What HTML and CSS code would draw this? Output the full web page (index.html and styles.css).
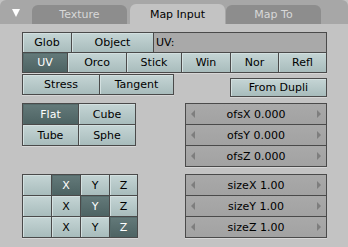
FILE: index.html
```html
<!DOCTYPE html>
<html lang="en">
    <head>
        <meta charset="UTF-8">
        <title>Map Input</title>
        <link rel="stylesheet" href="styles.css">
    </head>
    <body>
        <div class="panel">
            <div class="header">
                <span class="collapse"></span>
                <div class="tab">Texture</div>
                <div class="tab active">Map Input</div>
                <div class="tab last">Map To</div>
            </div>

            <div class="content">
                <div class="group top">
                    <div class="row">
                        <div class="btn" style="width:50px">Glob</div>
                        <div class="btn" style="width:83px">Object</div>
                        <div class="label" style="width:174px">UV:</div>
                    </div>
                    <div class="row">
                        <div class="btn on" style="width:46px">UV</div>
                        <div class="btn" style="width:60px">Orco</div>
                        <div class="btn" style="width:56px">Stick</div>
                        <div class="btn" style="width:50px">Win</div>
                        <div class="btn" style="width:49px">Nor</div>
                        <div class="btn" style="width:49px">Refl</div>
                    </div>
                </div>

                <div class="row third">
                    <div class="btn" style="width:78px">Stress</div>
                    <div class="btn" style="width:75px">Tangent</div>
                    <div class="dupli btn">From Dupli</div>
                </div>

                <div class="section">
                    <div class="group grid proj">
                        <div class="btn on">Flat</div>
                        <div class="btn">Cube</div>
                        <div class="btn">Tube</div>
                        <div class="btn">Sphe</div>
                    </div>
                    <div class="group fields">
                        <div class="num">ofsX 0.000</div>
                        <div class="num">ofsY 0.000</div>
                        <div class="num">ofsZ 0.000</div>
                    </div>
                </div>

                <div class="section lower">
                    <div class="group grid axes">
                        <div class="btn"></div>
                        <div class="btn on">X</div>
                        <div class="btn">Y</div>
                        <div class="btn">Z</div>
                        <div class="btn"></div>
                        <div class="btn">X</div>
                        <div class="btn on">Y</div>
                        <div class="btn">Z</div>
                        <div class="btn"></div>
                        <div class="btn">X</div>
                        <div class="btn">Y</div>
                        <div class="btn on">Z</div>
                    </div>
                    <div class="group fields">
                        <div class="num">sizeX 1.00</div>
                        <div class="num">sizeY 1.00</div>
                        <div class="num">sizeZ 1.00</div>
                    </div>
                </div>
            </div>
        </div>
    </body>
</html>
```

FILE: styles.css
```css
body {
    margin: 0;
    background-color: #c3c3c3;
    font-family: "DejaVu Sans", sans-serif;
    font-size: 11px;
    color: #000;
}
.panel {
    width: 348px;
    height: 247px;
}
.header {
    height: 24px;
    background-color: #a7a7a7;
    border-radius: 6px 6px 0 0;
    display: flex;
    align-items: flex-end;
}
.collapse {
    width: 0;
    height: 0;
    border-top: 8px solid #fff;
    border-left: 4.5px solid transparent;
    border-right: 4.5px solid transparent;
    align-self: flex-start;
    margin: 9px 12px 0 12px;
}
.tab {
    width: 95px;
    height: 19px;
    margin-right: 3px;
    border-radius: 6px 6px 0 0;
    background-color: #8d8d8d;
    color: #d8d8d8;
    display: flex;
    align-items: center;
    justify-content: center;
}
.tab.active {
    height: 20px;
    margin-right: 1px;
    background-color: #c3c3c3;
    color: #000;
}
.content {
    padding: 8px 21px 0 22px;
}
.row {
    display: flex;
}
.group .row + .row {
    margin-top: -1px;
}
.group {
    box-shadow: 0 1px 0 #d6d6d6;
}
.btn, .label, .num {
    box-sizing: border-box;
    height: 21px;
    border: 1px solid #4a4a4a;
    display: flex;
    align-items: center;
    justify-content: center;
}
.row .btn + .btn, .row .btn + .label {
    margin-left: -1px;
}
.btn {
    background: linear-gradient(#c5d5d5, #a8bcbc);
    box-shadow: inset 1px 1px 0 #d3e0e0;
}
.btn.on {
    background: linear-gradient(#647a7a, #4d6363);
    box-shadow: inset 1px 1px 0 #566c6c;
    color: #fff;
}
.label {
    background-color: #a9a9a9;
    justify-content: flex-start;
    padding-left: 2px;
}
.third {
    margin-top: 1px;
    align-items: flex-start;
}
.third .btn {
    box-shadow: inset 1px 1px 0 #d3e0e0, 0 1px 0 #d6d6d6;
}
.row.third .btn.dupli {
    width: 97px;
    height: 19px;
    margin-left: auto;
    margin-top: 4px;
}
.section {
    display: flex;
    justify-content: space-between;
    align-items: flex-start;
    margin-top: 6px;
}
.section.lower {
    margin-top: 7px;
}
.grid {
    display: grid;
}
.grid .btn {
    height: 22px;
    margin: -1px 0 0 -1px;
}
.proj {
    grid-template-columns: 56px 57px;
    padding: 1px 0 0 1px;
}
.axes {
    grid-template-columns: 29px 29px 29px 28px;
    padding: 1px 0 0 1px;
}
.fields {
    width: 142px;
    display: flex;
    flex-direction: column;
}
.num {
    position: relative;
    height: 22px;
    background: linear-gradient(#a9a9a9, #a2a2a2);
}
.num + .num {
    margin-top: -1px;
}
.num::before, .num::after {
    content: "";
    position: absolute;
    top: 6px;
    border-top: 4px solid transparent;
    border-bottom: 4px solid transparent;
}
.num::before {
    left: 5px;
    border-right: 4px solid #7e7e7e;
}
.num::after {
    right: 5px;
    border-left: 4px solid #7e7e7e;
}
```
